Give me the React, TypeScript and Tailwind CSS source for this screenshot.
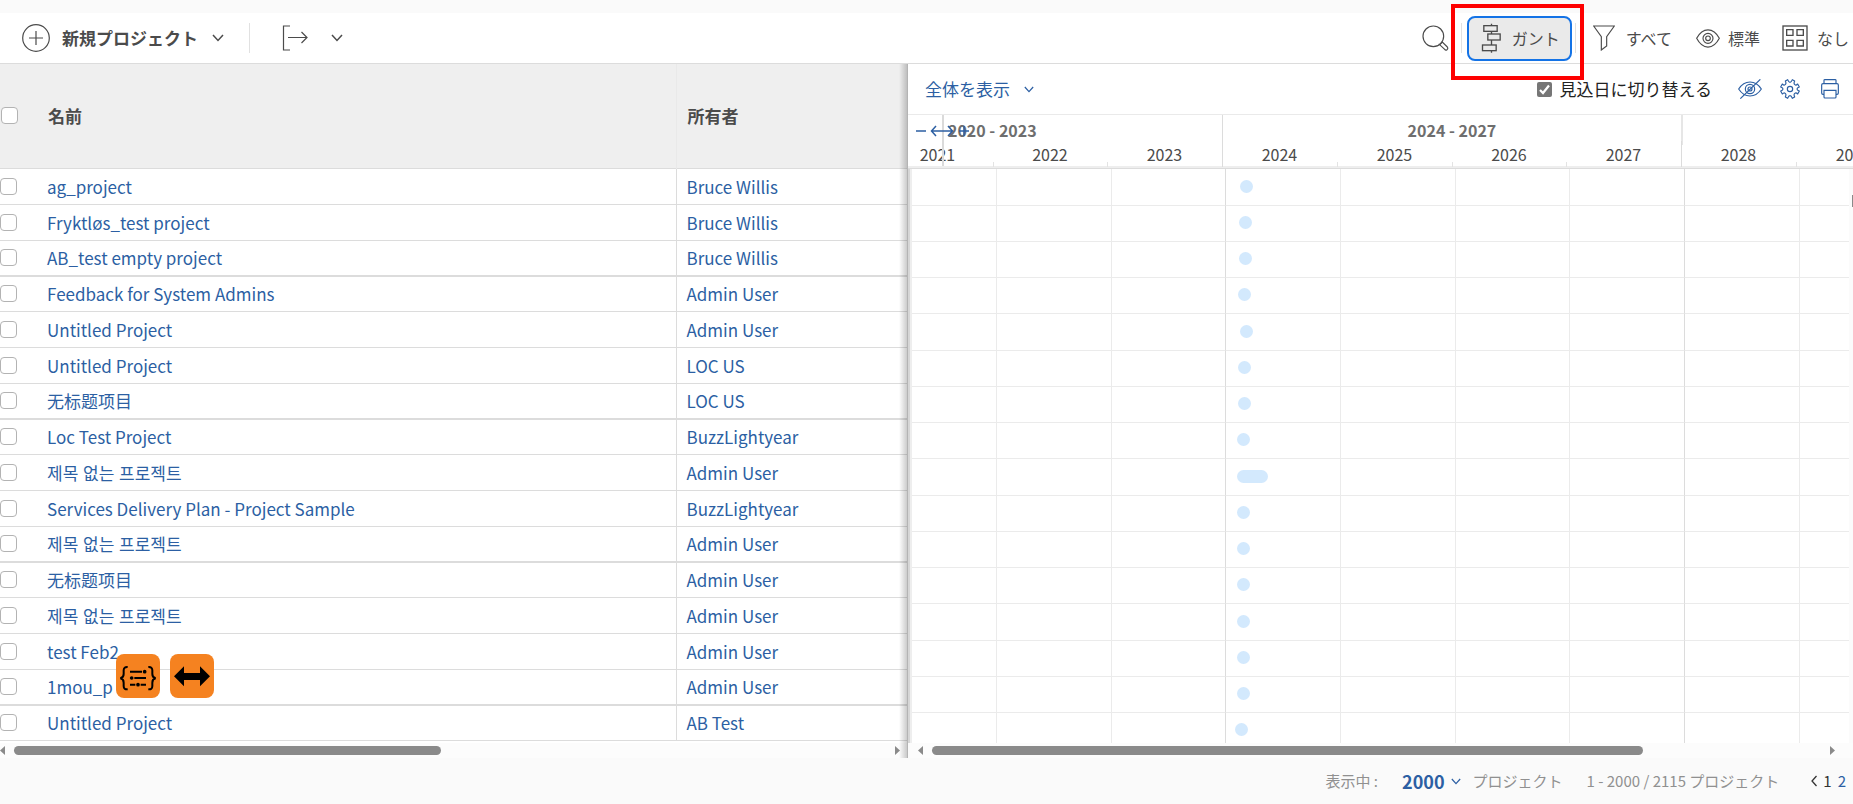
import React from "react";

type Project = { name: string; owner: string; lang?: string; offset: number; length?: number };

const projects: Project[] = [
  { name: "ag_project", owner: "Bruce Willis", offset: 14 },
  { name: "Fryktløs_test project", owner: "Bruce Willis", offset: 13 },
  { name: "AB_test empty project", owner: "Bruce Willis", offset: 13 },
  { name: "Feedback for System Admins", owner: "Admin User", offset: 12 },
  { name: "Untitled Project", owner: "Admin User", offset: 14 },
  { name: "Untitled Project", owner: "LOC US", offset: 12 },
  { name: "无标题项目", owner: "LOC US", lang: "zh", offset: 12 },
  { name: "Loc Test Project", owner: "BuzzLightyear", offset: 11 },
  { name: "제목 없는 프로젝트", owner: "Admin User", lang: "ko", offset: 11, length: 31 },
  { name: "Services Delivery Plan - Project Sample", owner: "BuzzLightyear", offset: 11 },
  { name: "제목 없는 프로젝트", owner: "Admin User", lang: "ko", offset: 11 },
  { name: "无标题项目", owner: "Admin User", lang: "zh", offset: 11 },
  { name: "제목 없는 프로젝트", owner: "Admin User", lang: "ko", offset: 11 },
  { name: "test Feb2", owner: "Admin User", offset: 11 },
  { name: "1mou_p", owner: "Admin User", offset: 11 },
  { name: "Untitled Project", owner: "AB Test", offset: 9 },
];

const years = ["2021", "2022", "2023", "2024", "2025", "2026", "2027", "2028", "2029"];
const TASK_COLUMN = 3;

const box =
  "block size-[17px] appearance-none rounded-[4px] border border-[#b3b3b3] bg-white";

function Chevron({ className = "" }: { className?: string }) {
  return (
    <svg className={className} viewBox="0 0 12 8" fill="none" stroke="currentColor" aria-hidden="true">
      <path d="M1 1 L6 6.5 L11 1" strokeWidth="1.5" />
    </svg>
  );
}

function Scrollbar({ className, thumb }: { className: string; thumb: string }) {
  return (
    <div className={`flex h-[15px] shrink-0 items-center bg-[#fcfcfc] text-[#8a8a8a] ${className}`}>
      <svg className="h-[9px] w-[5px] shrink-0" viewBox="0 0 5 9" fill="currentColor" aria-hidden="true">
        <path d="M5 0V9L0 4.500Z" />
      </svg>
      <div className="mx-[9px] flex grow">
        <div className={`h-[9px] rounded-full bg-[#8a8a8a] ${thumb}`} />
      </div>
      <svg className="h-[9px] w-[5px] shrink-0" viewBox="0 0 5 9" fill="currentColor" aria-hidden="true">
        <path d="M0 0V9L5 4.500Z" />
      </svg>
    </div>
  );
}

function Toolbar() {
  return (
    <header className="flex h-[51px] shrink-0 items-center whitespace-nowrap border-b border-[#dcdcdc] bg-white pr-1 text-[#4b4b4b]">
      <button type="button" className="ml-[22px] flex items-center">
        <svg className="size-7" viewBox="0 0 28 28" fill="none" stroke="currentColor" strokeWidth="1.200" aria-hidden="true">
          <circle cx="14" cy="14" r="13.300" />
          <path d="M14 7V21M7 14H21" />
        </svg>
        <span className="ml-3 text-[17px] font-bold leading-6">新規プロジェクト</span>
        <Chevron className="ml-[14px] h-2 w-3" />
      </button>
      <div className="ml-[25px] h-[30px] w-px bg-[#e1e1e1]" />
      <button type="button" aria-label="エクスポート" className="ml-8 flex items-center">
        <svg className="h-[26px] w-[26px]" viewBox="0 0 26 26" fill="none" stroke="currentColor" strokeWidth="1.200" aria-hidden="true">
          <path d="M8 1H1.500V25H8M6 12.500H25M19.500 7L25 12.500L19.500 18" />
        </svg>
        <Chevron className="ml-[23px] h-2 w-3" />
      </button>

      <div className="ml-auto flex items-center text-[16px]">
        <button type="button" aria-label="検索">
          <svg className="size-[27px]" viewBox="0 0 81 81" fill="none" stroke="currentColor" strokeWidth="3.500" aria-hidden="true">
            <circle cx="34" cy="34" r="31" />
            <path d="M55 57L61 51L76 66Q79 70 75 74Q71 77 68 73L52 58Z" />
          </svg>
        </button>
        <div className="ml-3 h-[30px] w-px bg-[#e1e1e1]" />
        <div className="relative ml-[5px]">
          <button
            type="button"
            aria-pressed="true"
            className="flex h-[45px] items-center rounded-lg border-2 border-[#1473e6] bg-[#eaeaea] pl-3 pr-[10px]"
          >
            <svg className="h-[30px] w-[21px]" viewBox="0 0 62 90" fill="none" stroke="currentColor" strokeWidth="4" aria-hidden="true">
              <path d="M31 2V8M31 25V33M31 51V66M31 83V89" />
              <rect x="8" y="8" width="40" height="17" />
              <rect x="20" y="33" width="37" height="18" />
              <rect x="4" y="66" width="41" height="17" />
            </svg>
            <span className="ml-[10px]">ガント</span>
          </button>
          <div className="pointer-events-none absolute -left-4 -top-3 h-[76px] w-[133px] border-4 border-[#fe0000]" />
        </div>
        <div className="ml-[3px] h-[30px] w-px bg-[#e1e1e1]" />
        <button type="button" className="ml-[17px] flex items-center">
          <svg className="h-[26px] w-[22px]" viewBox="0 0 66 78" fill="none" stroke="currentColor" strokeWidth="3.500" aria-hidden="true">
            <path d="M2 3H64L41 35V63L25 75V35Z" />
          </svg>
          <span className="ml-[11px]">すべて</span>
        </button>
        <button type="button" className="ml-6 flex items-center">
          <svg className="h-[19px] w-6" viewBox="0 0 72 57" fill="none" stroke="currentColor" strokeWidth="3.500" aria-hidden="true">
            <path d="M2 28C20 -6 52 -6 70 28C52 63 20 63 2 28Z" />
            <circle cx="36" cy="28" r="15" />
            <circle cx="36" cy="28" r="7" />
          </svg>
          <span className="ml-2">標準</span>
        </button>
        <button type="button" className="ml-[22px] flex items-center">
          <svg className="size-[26px]" viewBox="0 0 78 78" fill="none" stroke="currentColor" strokeWidth="4" aria-hidden="true">
            <rect x="3" y="3" width="72" height="72" />
            <path d="M14 14H33V31H14ZM45 14H64V31H45ZM14 46H33V63H14ZM45 46H64V63H45Z" />
          </svg>
          <span className="ml-[9px]">なし</span>
        </button>
      </div>
    </header>
  );
}

function ProjectTable() {
  return (
    <section className="relative w-[49%] shrink-0 overflow-hidden">
      <table className="w-full table-fixed border-collapse bg-white text-left text-[17px]">
        <colgroup>
          <col className="w-10" />
          <col />
          <col className="w-[231px]" />
        </colgroup>
        <thead>
          <tr className="h-[104px] border-b border-[#dcdcdc] bg-[#efefef] text-[#4b4b4b]">
            <th className="pl-px">
              <input type="checkbox" aria-label="すべて選択" className={box} />
            </th>
            <th className="pl-2 font-bold">名前</th>
            <th className="border-l border-[#e9e9e9] pl-[10px] font-bold">所有者</th>
          </tr>
        </thead>
        <tbody>
          {projects.map((p, i) => (
            <tr
              key={i}
              className={`border-[#dcdcdc] text-[#2c5fa3] ${i % 4 === 3 ? "h-[35px]" : "h-9"} ${
                i % 4 === 2 ? "border-b-2" : "border-b"
              }`}
            >
              <td>
                <input type="checkbox" aria-label={p.name} className={box} />
              </td>
              <td className="truncate pl-[7px] pt-px leading-6" lang={p.lang}>
                <a href="#project">{p.name}</a>
              </td>
              <td className="truncate border-l border-[#dcdcdc] pl-[9px] pt-px leading-6">
                <a href="#owner">{p.owner}</a>
              </td>
            </tr>
          ))}
        </tbody>
      </table>
      <div className="h-[2px] bg-white" />
      <Scrollbar className="pr-2" thumb="w-[49%]" />
      <div className="pointer-events-none absolute inset-y-0 right-0 w-[9px] border-r border-[#b4b4b4] bg-linear-to-r from-transparent to-black/20" />
      <div className="absolute left-[116px] top-[590px] flex gap-[10px]">
        <button type="button" aria-label="変数" className="rounded-lg bg-[#f58220]">
          <svg className="size-11" viewBox="0 0 132 132" fill="none" stroke="#000" strokeWidth="6" aria-hidden="true">
            <path d="M35 39Q23 38 23 49V60Q23 71 13 73Q23 75 23 86V96Q23 107 35 106M97 39Q109 38 109 49V60Q109 71 119 73Q109 75 109 86V96Q109 107 97 106" />
            <path d="M42 53H78M55 72H90M42 92H58M74 92H90" />
            <g fill="#000" stroke="none">
              <circle cx="86" cy="53" r="5.500" />
              <circle cx="47" cy="72" r="5.500" />
              <circle cx="66" cy="92" r="5.500" />
            </g>
          </svg>
        </button>
        <button type="button" aria-label="幅を変更" className="rounded-lg bg-[#f58220]">
          <svg className="size-11" viewBox="0 0 132 132" aria-hidden="true">
            <path d="M12 67L42 37V57H90V37L120 67L90 97V78H42V97Z" />
          </svg>
        </button>
      </div>
    </section>
  );
}

function GanttBar() {
  return (
    <div className="flex h-[51px] shrink-0 items-center whitespace-nowrap border-b border-[#eaeaea] bg-white pl-[17px] pr-[14px] text-[17px] text-[#2c5fa3]">
      <button type="button" className="flex items-center">
        全体を表示
        <Chevron className="ml-[14px] h-[7px] w-[10px]" />
      </button>
      <label className="ml-auto flex items-center text-[#222]">
        <span className="relative mr-2 block size-[15px]">
          <input type="checkbox" defaultChecked className="block size-[15px] appearance-none rounded-[2px] bg-[#767676]" />
          <svg className="pointer-events-none absolute inset-0 size-[15px]" viewBox="0 0 15 15" fill="none" stroke="#fff" strokeWidth="2.200" aria-hidden="true">
            <path d="M3 8L6 11L12 3.500" />
          </svg>
        </span>
        見込日に切り替える
      </label>
      <button type="button" aria-label="非表示" className="ml-[26px]">
        <svg className="h-5 w-6" viewBox="0 0 72 60" fill="none" stroke="currentColor" strokeWidth="3.500" aria-hidden="true">
          <path d="M2 30C20 2 52 2 70 30C52 58 20 58 2 30Z" />
          <circle cx="36" cy="30" r="14" />
          <circle cx="36" cy="30" r="6" />
          <path d="M7 59L67 1" />
        </svg>
      </button>
      <button type="button" aria-label="設定" className="ml-[18px]">
        <svg className="size-5" viewBox="0 0 60 60" fill="none" stroke="currentColor" strokeWidth="3.500" strokeLinejoin="round" aria-hidden="true">
          <path d="M51 30Q51 26 58 24L53 15Q48 20 45 17Q40 15 44 6L37 2Q34 10 30 10Q26 10 23 2L16 6Q20 15 15 17Q12 20 7 15L2 24Q9 26 9 30Q9 34 2 36L7 45Q12 40 15 43Q20 45 16 54L23 58Q26 50 30 50Q34 50 37 58L44 54Q40 45 45 43Q48 40 53 45L58 36Q51 34 51 30Z" />
          <circle cx="30" cy="30" r="8" />
        </svg>
      </button>
      <button type="button" aria-label="印刷" className="ml-[21px]">
        <svg className="h-5 w-[18px]" viewBox="0 0 54 60" fill="none" stroke="currentColor" strokeWidth="3.500" aria-hidden="true">
          <path d="M9 13V4Q9 2 12 2H42Q45 2 45 4V13M9 46H6Q2 46 2 42V18Q2 14 6 14H48Q52 14 52 18V42Q52 46 48 46H45" />
          <path d="M9 34H45V54Q45 57 42 57H12Q9 57 9 54Z" />
        </svg>
      </button>
    </div>
  );
}

function GanttScale() {
  return (
    <div className="relative h-[54px] shrink-0 overflow-hidden border-b border-[#dcdcdc] bg-white">
      <div className="grid h-[26px] grid-cols-[36px_278px_459px_1fr] text-[16px] font-bold leading-[30px] text-[#6e6e6e]">
        <div />
        <div className="pl-1">2020 - 2023</div>
        <div className="border-l border-[#dcdcdc] text-center">2024 - 2027</div>
        <div className="border-l-2 border-[#e6e6e6]" />
      </div>
      <div className="grid h-[27px] grid-cols-[85px_114px_115px_115px_115px_114px_115px_115px_115px] border-b-2 border-[#eee] text-center text-[16px] leading-[26px] text-[#4b4b4b]">
        {years.map((y, i) => (
          <div key={y} className={`relative ${i === 0 ? "pr-[26px]" : ""}`}>
            {i > 0 && (
              <span
                className={`absolute bottom-0 left-0 w-px ${
                  i === 3 || i === 7 ? "top-0 bg-[#dcdcdc]" : "h-[5px] bg-[#e3e3e3]"
                }`}
              />
            )}
            {y}
          </div>
        ))}
      </div>
      <div className="absolute left-[34px] top-0 h-[51px] w-[2px] bg-[#dadada]" />
      <svg className="absolute left-2 top-[10px] h-3 w-[53px] text-[#2c5fa3]" viewBox="0 0 53 12" fill="none" stroke="currentColor" strokeWidth="1.500" aria-hidden="true">
        <path d="M0 6H10M16 6H36M20 1L15.500 6L20 11M32 1L36.500 6L32 11M43 6H53M48 1V11" />
      </svg>
    </div>
  );
}

function GanttChart() {
  return (
    <div className="flex h-[574px] shrink-0 overflow-hidden border-l-2 border-[#d6d6d6]">
      <div className="grow overflow-hidden border-l-2 border-[#eee] bg-white">
        {projects.map((p, i) => (
          <div
            key={i}
            className={`grid grid-cols-[84px_115px_114px_115px_115px_114px_115px_115px_115px] ${
              i % 4 === 0 ? "h-[37px]" : "h-9"
            }`}
          >
            {years.map((y, c) => (
              <div
                key={y}
                className={`flex items-center border-b border-b-[#ebebeb] pb-[2px] ${
                  c === 0 ? "" : c === TASK_COLUMN || c === 7 ? "border-l border-l-[#dcdcdc]" : "border-l border-l-[#ebebeb]"
                }`}
              >
                {c === TASK_COLUMN && (
                  <div
                    className="h-[13px] rounded-full bg-[#d3e9fd]"
                    style={{ marginLeft: p.offset, width: p.length ?? 13 }}
                  />
                )}
              </div>
            ))}
          </div>
        ))}
      </div>
      <div className="flex w-1 shrink-0 flex-col items-end bg-[#fbfbfb] pt-[26px]">
        <div className="h-3 w-px bg-[#8a8a8a]" />
      </div>
    </div>
  );
}

function Footer() {
  return (
    <footer className="flex grow items-center justify-end whitespace-nowrap pr-[7px] text-[15px] text-[#909090]">
      <span>表示中 :</span>
      <button type="button" className="ml-6 flex items-center text-[18px] font-bold text-[#2c5fa3]">
        2000
        <Chevron className="ml-[6px] h-[7px] w-[10px]" />
      </button>
      <span className="ml-3">プロジェクト</span>
      <span className="ml-6">1 - 2000 / 2115 プロジェクト</span>
      <nav className="ml-8 flex items-center gap-[6px] text-[#333]" aria-label="ページ">
        <button type="button" aria-label="前へ">
          <svg className="h-3 w-[6px]" viewBox="0 0 6 12" fill="none" stroke="currentColor" strokeWidth="1.300" aria-hidden="true">
            <path d="M5.500 1L1 6L5.500 11" />
          </svg>
        </button>
        <span>1</span>
        <a href="#page2" className="text-[#2c5fa3]">2</a>
      </nav>
    </footer>
  );
}

export default function App() {
  return (
    <div
      lang="ja"
      className="flex min-h-screen flex-col overflow-hidden bg-[#fafafa] pt-[13px] font-['Noto_Sans_CJK_JP','Noto_Sans_CJK_SC','Noto_Sans_CJK_KR',sans-serif]"
    >
      <Toolbar />
      <main className="flex">
        <ProjectTable />
        <section className="flex min-w-0 grow flex-col">
          <GanttBar />
          <GanttScale />
          <GanttChart />
          <Scrollbar className="ml-[2px] pl-2 pr-[18px]" thumb="w-[80%]" />
        </section>
      </main>
      <Footer />
    </div>
  );
}
